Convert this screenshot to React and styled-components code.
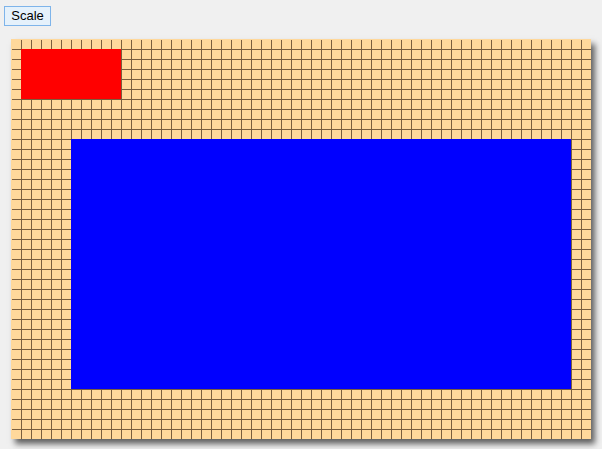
import React from "react";
import styled, { createGlobalStyle } from "styled-components";

const GlobalStyle = createGlobalStyle`
  html, body {
    margin: 0;
    padding: 0;
    background: #f0f0f0;
    font-family: "Liberation Sans", Arial, sans-serif;
  }
`;

const Page = styled.div`
  display: flex;
  flex-direction: column;
  align-items: flex-start;
  padding: 6px 0 10px 4px;
`;

const Button = styled.button`
  width: 47px;
  height: 20px;
  padding: 0;
  border: 1px solid #7eb4ea;
  background: #e5f1fb;
  color: #000;
  font-family: "Liberation Sans", Arial, sans-serif;
  font-size: 13px;
  line-height: 18px;
  cursor: default;
`;

const Canvas = styled.div`
  position: relative;
  width: 580px;
  height: 400px;
  margin: 13px 0 0 7px;
  background-color: #ffd89b;
  box-shadow: 4px 5px 6px rgba(0, 0, 0, 0.6);
`;

// grid lines every 10px across the whole canvas, none on the outer edge
const Grid = styled.div`
  position: absolute;
  inset: 0;
  padding: 1px 0 0 1px;
  box-sizing: border-box;
  background-image:
    linear-gradient(90deg, #7a5e3e 0px, #7a5e3e 1px, transparent 1px, transparent 10px),
    linear-gradient(180deg, #7a5e3e 0px, #7a5e3e 1px, transparent 1px, transparent 10px);
  background-size: 10px 10px;
  background-origin: padding-box;
  background-clip: content-box;
`;

const Shape = styled.div`
  position: absolute;
  left: ${(p) => p.x}px;
  top: ${(p) => p.y}px;
  width: ${(p) => p.w}px;
  height: ${(p) => p.h}px;
  background: ${(p) => p.color};
`;

export default function App() {
  return (
    <>
      <GlobalStyle />
      <Page>
        <Button>Scale</Button>
        <Canvas>
          <Grid />
          <Shape x={10} y={10} w={100} h={50} color="#ff0000" />
          <Shape x={60} y={100} w={500} h={250} color="#0000ff" />
        </Canvas>
      </Page>
    </>
  );
}
